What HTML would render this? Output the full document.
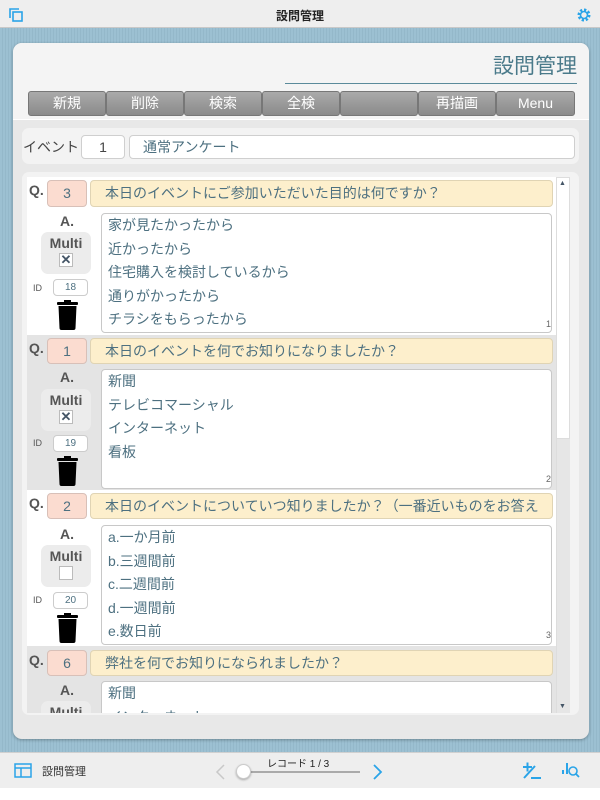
<!DOCTYPE html>
<html><head><meta charset="utf-8">
<style>
*{margin:0;padding:0;box-sizing:border-box}
body{width:600px;height:800px;position:relative;overflow:hidden;background:#fff;font-family:"Liberation Sans","Noto Sans CJK JP",sans-serif}
.a{position:absolute}
#top{left:0;top:0;width:600px;height:28px;background:#eeeeee;border-bottom:1px solid #c8c8c8}
#bg{left:0;top:28px;width:600px;height:724px;background:repeating-linear-gradient(90deg,#9cc0d2 0,#9cc0d2 2px,#94b8ca 2px,#94b8ca 3px)}
#card{left:13px;top:43px;width:576px;height:696px;background:#e8e8e8;border-radius:9px;box-shadow:0 1px 3px rgba(0,0,0,.3);overflow:hidden}
#cardtop{left:0;top:0;width:576px;height:77px;background:#f4f4f4;border-bottom:1px solid #fff}
.btn{position:absolute;top:91px;height:25px;background:linear-gradient(#aaa,#8a8a8a);border:1px solid #777;border-radius:3px;color:#fff;font-size:14px;text-align:center;line-height:23px}
.panel{background:#f3f3f3;border-radius:7px}
.box{background:#fff;border:1px solid #cfcfcf;border-radius:4px}
.qn{background:#fbdcd0;border:1px solid #d8c0b8;border-radius:4px;color:#4d7080;font-size:14px;text-align:center;line-height:25px}
.qt{background:#fdefcc;border:1px solid #e0d4b4;border-radius:4px;color:#4d7080;font-size:14px;line-height:25px;padding-left:14px;white-space:nowrap;overflow:hidden}
.ans{background:#fff;border:1px solid #c8c8c8;border-radius:4px;color:#4d7080;font-size:14px;line-height:23.5px;padding:0 0 0 6px;overflow:hidden}
.lbl{font-weight:bold;color:#555;font-size:14px}
.multi{background:#ececec;border-radius:7px;text-align:center;font-weight:bold;color:#555;font-size:14px;padding-top:3px}
.cb{display:block;margin:2px auto 0;width:14px;height:14px;border:1px solid #bbb;background:#fff;font-size:13px;line-height:12px;color:#456;font-weight:bold}
.idb{background:#fff;border:1px solid #ccc;border-radius:4px;font-size:10px;text-align:center;color:#4d7080;line-height:15px}
.pg{font-size:9px;color:#666}
</style></head><body>
<div id="top" class="a">
<svg class="a" style="left:8px;top:7px" width="16" height="16"><path d="M2 11V2h9" fill="none" stroke="#2aa4e8" stroke-width="1.6"/><rect x="5" y="5" width="9" height="9" fill="none" stroke="#2aa4e8" stroke-width="1.6"/></svg>
<div class="a" style="left:0;width:600px;top:7px;text-align:center;font-size:12px;font-weight:bold;color:#222">設問管理</div>
<svg class="a" style="left:576px;top:7px" width="16" height="16" viewBox="0 0 16 16"><circle cx="8" cy="8" r="5" fill="none" stroke="#2aa4e8" stroke-width="3" stroke-dasharray="2.2 1.7"/><circle cx="8" cy="8" r="3.5" fill="none" stroke="#2aa4e8" stroke-width="1.6"/></svg>
</div>
<div id="bg" class="a"></div>
<div id="card" class="a">
<div id="cardtop" class="a"></div>
<div class="a" style="right:12px;top:7px;font-size:21px;color:#4a7a8a">設問管理</div>
<div class="a" style="left:272px;top:40px;width:292px;height:1px;background:#5a8a9a"></div>
</div>
<div class="btn" style="left:28px;width:78px">新規</div>
<div class="btn" style="left:106px;width:78px">削除</div>
<div class="btn" style="left:184px;width:78px">検索</div>
<div class="btn" style="left:262px;width:78px">全検</div>
<div class="btn" style="left:340px;width:78px"></div>
<div class="btn" style="left:418px;width:78px">再描画</div>
<div class="btn" style="left:496px;width:79px">Menu</div>
<div class="a panel" style="left:22px;top:128px;width:557px;height:36px"></div>
<div class="a" style="left:23px;top:137px;font-size:14px;color:#444">イベント</div>
<div class="a box" style="left:81px;top:135px;width:44px;height:24px;text-align:center;font-size:14px;line-height:22px;color:#444">1</div>
<div class="a box" style="left:129px;top:135px;width:446px;height:24px;font-size:14px;line-height:22px;color:#4d7080;padding-left:13px">通常アンケート</div>
<div class="a panel" style="left:22px;top:172px;width:557px;height:543px"></div>
<div class="a" style="left:27px;top:177px;width:529px;height:536px;background:#fff;overflow:hidden">
 <div class="a" style="left:0;top:158px;width:529px;height:155px;background:#e4e4e4"></div>
 <div class="a" style="left:0;top:469px;width:529px;height:80px;background:#e4e4e4"></div>
</div>

<div class="a" style="left:0;top:0;width:600px;height:713px;overflow:hidden">
<!-- row1 -->
<div class="a lbl" style="left:29px;top:182px">Q.</div>
<div class="a qn" style="left:47px;top:180px;width:40px;height:27px">3</div>
<div class="a qt" style="left:90px;top:180px;width:463px;height:27px">本日のイベントにご参加いただいた目的は何ですか？</div>
<div class="a lbl" style="left:60px;top:213px">A.</div>
<div class="a multi" style="left:41px;top:232px;width:50px;height:42px">Multi<span class="cb">✕</span></div>
<div class="a" style="left:33px;top:283px;font-size:9px;color:#555">ID</div>
<div class="a idb" style="left:53px;top:279px;width:35px;height:17px">18</div>
<svg class="a" style="left:57px;top:300px" width="21" height="30"><rect x="0" y="2" width="21" height="3" rx="1"/><rect x="7" y="0" width="7" height="3"/><path d="M1.5 6h18l-1 22q0 2-2 2h-12q-2 0-2-2z"/></svg>
<div class="a ans" style="left:101px;top:213px;width:451px;height:120px"><div>家が見たかったから</div><div>近かったから</div><div>住宅購入を検討しているから</div><div>通りがかったから</div><div>チラシをもらったから</div></div>
<div class="a pg" style="left:546px;top:319px">1</div>
<!-- row2 -->
<div class="a lbl" style="left:29px;top:340px">Q.</div>
<div class="a qn" style="left:47px;top:338px;width:40px;height:26px">1</div>
<div class="a qt" style="left:90px;top:338px;width:463px;height:26px">本日のイベントを何でお知りになりましたか？</div>
<div class="a lbl" style="left:60px;top:369px">A.</div>
<div class="a multi" style="left:41px;top:389px;width:50px;height:42px">Multi<span class="cb">✕</span></div>
<div class="a" style="left:33px;top:438px;font-size:9px;color:#555">ID</div>
<div class="a idb" style="left:53px;top:435px;width:35px;height:17px">19</div>
<svg class="a" style="left:57px;top:456px" width="21" height="30"><rect x="0" y="2" width="21" height="3" rx="1"/><rect x="7" y="0" width="7" height="3"/><path d="M1.5 6h18l-1 22q0 2-2 2h-12q-2 0-2-2z"/></svg>
<div class="a ans" style="left:101px;top:369px;width:451px;height:120px"><div>新聞</div><div>テレビコマーシャル</div><div>インターネット</div><div>看板</div></div>
<div class="a pg" style="left:546px;top:474px">2</div>
<!-- row3 -->
<div class="a lbl" style="left:29px;top:495px">Q.</div>
<div class="a qn" style="left:47px;top:493px;width:40px;height:26px">2</div>
<div class="a qt" style="left:90px;top:493px;width:463px;height:26px">本日のイベントについていつ知りましたか？（一番近いものをお答え</div>
<div class="a lbl" style="left:60px;top:526px">A.</div>
<div class="a multi" style="left:41px;top:545px;width:50px;height:42px">Multi<span class="cb"></span></div>
<div class="a" style="left:33px;top:595px;font-size:9px;color:#555">ID</div>
<div class="a idb" style="left:53px;top:592px;width:35px;height:17px">20</div>
<svg class="a" style="left:57px;top:613px" width="21" height="30"><rect x="0" y="2" width="21" height="3" rx="1"/><rect x="7" y="0" width="7" height="3"/><path d="M1.5 6h18l-1 22q0 2-2 2h-12q-2 0-2-2z"/></svg>
<div class="a ans" style="left:101px;top:525px;width:451px;height:120px"><div>a.一か月前</div><div>b.三週間前</div><div>c.二週間前</div><div>d.一週間前</div><div>e.数日前</div></div>
<div class="a pg" style="left:546px;top:630px">3</div>
<!-- row4 -->
<div class="a lbl" style="left:29px;top:652px">Q.</div>
<div class="a qn" style="left:47px;top:650px;width:40px;height:26px">6</div>
<div class="a qt" style="left:90px;top:650px;width:463px;height:26px">弊社を何でお知りになられましたか？</div>
<div class="a lbl" style="left:60px;top:682px">A.</div>
<div class="a multi" style="left:41px;top:701px;width:50px;height:42px">Multi</div>
<div class="a ans" style="left:101px;top:681px;width:451px;height:120px"><div>新聞</div><div>インターネット</div></div>
</div>

<div class="a" style="left:556px;top:177px;width:14px;height:536px;background:#e6e6e6;border-left:1px solid #ddd"></div>
<div class="a" style="left:556px;top:177px;width:14px;height:262px;background:#fff;border:1px solid #ddd"></div>
<div class="a" style="left:559px;top:180px;font-size:7px;color:#456">▲</div>
<div class="a" style="left:559px;top:703px;font-size:7px;color:#456">▼</div>

<!-- bottom bar -->
<div class="a" style="left:0;top:752px;width:600px;height:36px;background:#eeeeee;border-top:1px solid #d0d0d0"></div>
<svg class="a" style="left:14px;top:763px" width="18" height="15"><rect x="1" y="1" width="16" height="13" fill="none" stroke="#2aa4e8" stroke-width="1.5"/><path d="M1 5h16M7 5v9" stroke="#2aa4e8" stroke-width="1.5"/></svg>
<div class="a" style="left:42px;top:763px;font-size:11px;color:#333">設問管理</div>
<div class="a" style="left:267px;top:755px;font-size:10px;color:#222">レコード 1 / 3</div>
<svg class="a" style="left:214px;top:763px" width="12" height="18"><path d="M10 2L3 9l7 7" fill="none" stroke="#c8c8c8" stroke-width="1.5"/></svg>
<div class="a" style="left:243px;top:771px;width:117px;height:2px;background:#aaa"></div>
<div class="a" style="left:236px;top:764px;width:15px;height:15px;border-radius:50%;background:#fff;border:1px solid #ccc;box-shadow:0 1px 2px rgba(0,0,0,.3)"></div>
<svg class="a" style="left:372px;top:763px" width="12" height="18"><path d="M2 2l7 7-7 7" fill="none" stroke="#2aa4e8" stroke-width="1.8"/></svg>
<svg class="a" style="left:522px;top:761px" width="22" height="20"><path d="M1 6h9M5.5 1.5v9M2 17L13 5M9 17h10" stroke="#2aa4e8" stroke-width="2" fill="none"/></svg>
<svg class="a" style="left:561px;top:760px" width="20" height="20"><rect x="1" y="10" width="2" height="4" fill="#2aa4e8"/><rect x="5" y="3" width="2" height="11" fill="#2aa4e8"/><circle cx="12" cy="11" r="4" fill="none" stroke="#2aa4e8" stroke-width="1.6"/><path d="M15 14l3 3" stroke="#2aa4e8" stroke-width="1.8"/></svg>
</body></html>
